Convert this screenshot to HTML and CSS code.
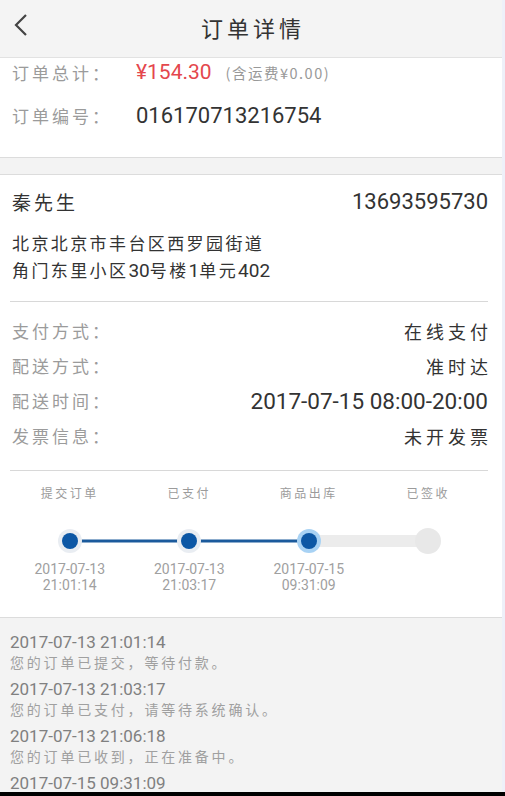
FILE: index.html
```html
<!DOCTYPE html>
<html lang="zh-CN">

<head>
    <meta charset="UTF-8">
    <meta name="viewport" content="width=device-width, initial-scale=1.0">
    <title>订单详情</title>
    <link rel="stylesheet" href="styles.css">
</head>

<body>
    <div class="page">
        <div class="header">
            <span class="back">
                <svg width="16" height="24" viewBox="0 0 16 24">
                    <polyline points="13,2 3,12 13,22" fill="none" stroke="#444" stroke-width="2.2" />
                </svg>
            </span>
            <h1 class="title">订单详情</h1>
        </div>

        <div class="card summary">
            <div class="sum-row">
                <span class="sum-label">订单总计：</span>
                <span class="price">¥154.30</span>
                <span class="freight">(含运费¥0.00)</span>
            </div>
            <div class="sum-row">
                <span class="sum-label">订单编号：</span>
                <span class="num">016170713216754</span>
            </div>
        </div>

        <div class="card detail">
            <div class="contact">
                <span class="name">秦先生</span>
                <span class="num">13693595730</span>
            </div>
            <div class="address">
                北京北京市丰台区西罗园街道<br>
                角门东里小区<span class="digits">30</span>号楼<span class="digits">1</span>单元<span class="digits">402</span>
            </div>

            <div class="info">
                <div class="info-row">
                    <span class="info-label">支付方式：</span>
                    <span class="info-value">在线支付</span>
                </div>
                <div class="info-row">
                    <span class="info-label">配送方式：</span>
                    <span class="info-value">准时达</span>
                </div>
                <div class="info-row">
                    <span class="info-label">配送时间：</span>
                    <span class="num wide">2017-07-15 08:00-20:00</span>
                </div>
                <div class="info-row">
                    <span class="info-label">发票信息：</span>
                    <span class="info-value">未开发票</span>
                </div>
            </div>

            <div class="steps">
                <div class="step-names">
                    <span>提交订单</span>
                    <span>已支付</span>
                    <span>商品出库</span>
                    <span>已签收</span>
                </div>
                <svg class="track" width="478" height="30" viewBox="0 0 478 30">
                    <line x1="299" y1="15" x2="418" y2="15" stroke="#ececec" stroke-width="12" />
                    <circle cx="418" cy="15" r="13" fill="#e8e8e8" />
                    <line x1="60" y1="15" x2="299" y2="15" stroke="#1b5a9c" stroke-width="3" />
                    <circle cx="60" cy="15" r="12" fill="#e9edf2" />
                    <circle cx="60" cy="15" r="8" fill="#0c57a5" />
                    <circle cx="179" cy="15" r="12" fill="#e9edf2" />
                    <circle cx="179" cy="15" r="8" fill="#0c57a5" />
                    <circle cx="299" cy="15" r="12" fill="#a8d2f4" />
                    <circle cx="299" cy="15" r="8" fill="#0c57a5" />
                </svg>
                <div class="step-times">
                    <span>2017-07-13<br>21:01:14</span>
                    <span>2017-07-13<br>21:03:17</span>
                    <span>2017-07-15<br>09:31:09</span>
                    <span></span>
                </div>
            </div>
        </div>

        <div class="log">
            <div class="log-item">
                <div class="log-time">2017-07-13 21:01:14</div>
                <div class="log-msg">您的订单已提交，等待付款。</div>
            </div>
            <div class="log-item">
                <div class="log-time">2017-07-13 21:03:17</div>
                <div class="log-msg">您的订单已支付，请等待系统确认。</div>
            </div>
            <div class="log-item">
                <div class="log-time">2017-07-13 21:06:18</div>
                <div class="log-msg">您的订单已收到，正在准备中。</div>
            </div>
            <div class="log-item">
                <div class="log-time">2017-07-15 09:31:09</div>
            </div>
        </div>
    </div>
    <div class="bottom-bar"></div>
</body>

</html>
```

FILE: styles.css
```css
body {
    margin: 0;
    background-color: #eef0f9;
    font-family: Roboto, "Noto Sans CJK SC", sans-serif;
    color: #333;
    overflow: hidden;
}

.page {
    width: 502px;
    height: 792px;
    background-color: #f3f3f3;
    display: flex;
    flex-direction: column;
    overflow: hidden;
}

.header {
    height: 57px;
    flex-shrink: 0;
    display: flex;
    align-items: center;
    justify-content: center;
    position: relative;
    background-color: #f4f4f4;
    border-bottom: 1px solid #e2e2e2;
}

.back {
    position: absolute;
    left: 13px;
    top: 13px;
}

.title {
    margin: 0 0 4px 4px;
    font-size: 22px;
    font-weight: normal;
    letter-spacing: 4px;
    color: #333;
    font-family: "Noto Sans CJK SC", sans-serif;
}

.card {
    background-color: #fff;
    flex-shrink: 0;
}

.summary {
    padding: 0 12px 28px;
    border-bottom: 1px solid #dcdcdc;
    display: flex;
    flex-direction: column;
    gap: 15px;
}

.sum-row {
    display: flex;
    align-items: center;
    height: 28px;
}

.sum-label {
    width: 124px;
    font-family: "Noto Sans CJK SC", sans-serif;
    font-size: 17px;
    letter-spacing: 3px;
    color: #9b9b9b;
}

.price {
    font-size: 21px;
    color: #e4474d;
}

.freight {
    margin-left: 14px;
    font-size: 14.5px;
    letter-spacing: 1.5px;
    color: #999;
    font-family: "Noto Sans CJK SC", sans-serif;
}

.num {
    font-size: 22px;
    color: #333;
}

.wide {
    font-size: 22.5px;
}

.detail {
    margin-top: 16px;
    padding: 13px 14px 24px 12px;
    border-top: 1px solid #dcdcdc;
    border-bottom: 1px solid #dcdcdc;
}

.contact {
    display: flex;
    justify-content: space-between;
    align-items: center;
    height: 26px;
}

.name {
    font-family: "Noto Sans CJK SC", sans-serif;
    font-size: 19px;
    letter-spacing: 3px;
}

.address {
    margin-top: 15px;
    font-family: "Noto Sans CJK SC", sans-serif;
    font-size: 17px;
    line-height: 27px;
    letter-spacing: 2.4px;
    padding-bottom: 17px;
    border-bottom: 1px solid #d8d8d8;
    margin-left: -2px;
    padding-left: 2px;
}

.digits {
    font-family: Roboto, sans-serif;
    font-size: 19px;
    letter-spacing: 0;
}

.info {
    padding: 11px 0 17px;
    border-bottom: 1px solid #d8d8d8;
    margin-left: -2px;
    padding-left: 2px;
}

.info-row {
    display: flex;
    justify-content: space-between;
    align-items: center;
    height: 35px;
}

.info-label {
    font-family: "Noto Sans CJK SC", sans-serif;
    font-size: 17px;
    letter-spacing: 3px;
    color: #9b9b9b;
}

.info-value {
    font-family: "Noto Sans CJK SC", sans-serif;
    font-size: 18px;
    letter-spacing: 4px;
    margin-right: -4px;
    color: #333;
}

.steps {
    padding-top: 14px;
    margin-left: -2px;
}

.step-names,
.step-times {
    display: grid;
    grid-template-columns: repeat(4, 1fr);
    text-align: center;
    width: 478px;
}

.step-names span {
    font-family: "Noto Sans CJK SC", sans-serif;
    font-size: 12px;
    line-height: 16px;
    letter-spacing: 2.5px;
    color: #9b9b9b;
}

.track {
    display: block;
    margin-top: 25px;
}

.step-times {
    margin-top: 5px;
}

.step-times span {
    font-size: 14px;
    line-height: 16px;
    color: #a0a0a0;
}

.log {
    flex: 1;
    padding: 14px 10px 0;
    display: flex;
    flex-direction: column;
    gap: 7px;
}

.log-time {
    font-size: 17px;
    line-height: 20px;
    color: #808080;
}

.log-msg {
    font-family: "Noto Sans CJK SC", sans-serif;
    font-size: 14px;
    line-height: 20px;
    letter-spacing: 2.8px;
    color: #a0a0a0;
}

.bottom-bar {
    height: 4px;
    background-color: #000;
}
```
